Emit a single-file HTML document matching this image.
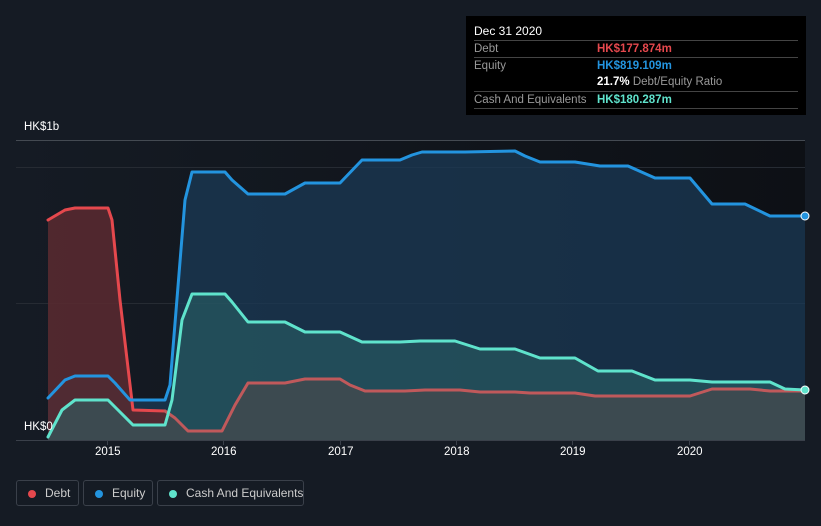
<!DOCTYPE html>
<html><head><meta charset="utf-8"><style>
body{margin:0;width:821px;height:526px;background:#151b24;font-family:"Liberation Sans",sans-serif;overflow:hidden;position:relative}
.tt{position:absolute;left:466px;top:16px;width:340px;height:99px;background:#000;color:#fff;font-size:11.5px}
.tt .h{position:absolute;left:8px;top:8px;font-size:12px}
.row{position:absolute;left:8px;width:324px;border-top:1px solid #444;height:17px;line-height:16px;white-space:nowrap}
.row .l{position:absolute;left:0;color:#999}
.row .v{position:absolute;left:123px;font-weight:bold}
.leg{position:absolute;top:480px;height:26px;border:1px solid #3a404a;border-radius:3px;color:#ccc;font-size:12px;line-height:25px;box-sizing:border-box;white-space:nowrap}
.leg i{position:absolute;left:11px;top:9px;width:8px;height:8px;border-radius:50%}
.leg span{position:absolute;left:28px}
.ax{position:absolute;color:#fff;font-size:11.5px}
</style></head><body>
<svg width="821" height="526" style="position:absolute;left:0;top:0">
<defs>
<linearGradient id="bg" x1="0" x2="1" y1="0" y2="0"><stop offset="0" stop-color="#151b24"/><stop offset="1" stop-color="#0d1015"/></linearGradient>
</defs>
<rect x="16" y="140" width="789" height="300" fill="url(#bg)"/>
<line x1="16" y1="140.5" x2="805" y2="140.5" stroke="#444a52"/>
<line x1="16" y1="167.5" x2="805" y2="167.5" stroke="#262b33"/>
<line x1="16" y1="303.5" x2="805" y2="303.5" stroke="#262b33"/>
<polygon fill="#1b3a55" fill-opacity="0.75" points="48,440 48,398 65,380 75,376 108,376 115,383 130,400 165,400 170,385 185,200 192,172 225,172 232,180 248,194 285,194 305,183 340,183 362,160 400,160 412,155 422,152 465,152 515,151 525,156 540,162 575,162 600,166 628,166 655,178 690,178 712,204 745,204 770,216 805,216 805,440"/>
<polygon fill="#5a2a30" fill-opacity="0.85" points="48,440 48,220 65,210 75,208 108,208 112,220 120,300 133,410 165,411 175,418 188,431 222,431 235,405 248,383 285,383 305,379 340,379 350,385 365,391 405,391 425,390 460,390 480,392 515,392 530,393 575,393 595,396 690,396 712,389 750,389 770,391 805,391 805,440"/>
<polygon fill="#2b6468" fill-opacity="0.55" points="48,440 48,437 62,410 75,400 108,400 120,412 133,425 165,425 172,400 182,320 192,294 225,294 232,302 248,322 285,322 305,332 340,332 362,342 400,342 420,341 455,341 480,349 515,349 540,358 575,358 598,371 632,371 655,380 690,380 712,382 770,382 785,389 805,390 805,440"/>
<g fill="none" stroke-width="3" stroke-linejoin="round" stroke-linecap="round">
<polyline stroke="#e5484d" points="48,220 65,210 75,208 108,208 112,220 120,300 133,410 165,411"/>
<polyline stroke="#c0595b" points="165,411 175,418 188,431 222,431 235,405 248,383 285,383 305,379 340,379 350,385 365,391 405,391 425,390 460,390 480,392 515,392 530,393 575,393 595,396 690,396 712,389 750,389 770,391 805,391"/>
<polyline stroke="#2394df" points="48,398 65,380 75,376 108,376 115,383 130,400 165,400 170,385 185,200 192,172 225,172 232,180 248,194 285,194 305,183 340,183 362,160 400,160 412,155 422,152 465,152 515,151 525,156 540,162 575,162 600,166 628,166 655,178 690,178 712,204 745,204 770,216 805,216"/>
<polyline stroke="#5fe3cc" points="48,437 62,410 75,400 108,400 120,412 133,425 165,425 172,400 182,320 192,294 225,294 232,302 248,322 285,322 305,332 340,332 362,342 400,342 420,341 455,341 480,349 515,349 540,358 575,358 598,371 632,371 655,380 690,380 712,382 770,382 785,389 805,390"/>
</g>
<circle cx="805" cy="216" r="4" fill="#2394df" stroke="#fff" stroke-width="1"/>
<circle cx="805" cy="390" r="4" fill="#5fe3cc" stroke="#fff" stroke-width="1"/>
<line x1="16" y1="440.5" x2="805" y2="440.5" stroke="#3a404a"/>
<g stroke="#3a404a"><line x1="107.5" y1="440" x2="107.5" y2="445"/><line x1="223.5" y1="440" x2="223.5" y2="445"/><line x1="340.5" y1="440" x2="340.5" y2="445"/><line x1="456.5" y1="440" x2="456.5" y2="445"/><line x1="572.5" y1="440" x2="572.5" y2="445"/><line x1="689.5" y1="440" x2="689.5" y2="445"/></g>
</svg>
<div class="ax" style="left:24px;top:121px">HK$1b</div>
<div class="ax" style="left:24px;top:421px">HK$0</div>
<div class="ax" style="left:95px;top:446px">2015</div>
<div class="ax" style="left:211px;top:446px">2016</div>
<div class="ax" style="left:328px;top:446px">2017</div>
<div class="ax" style="left:444px;top:446px">2018</div>
<div class="ax" style="left:560px;top:446px">2019</div>
<div class="ax" style="left:677px;top:446px">2020</div>
<div class="tt">
<div class="h">Dec 31 2020</div>
<div class="row" style="top:24px"><span class="l">Debt</span><span class="v" style="color:#e5484d">HK$177.874m</span></div>
<div class="row" style="top:41px"><span class="l">Equity</span><span class="v" style="color:#2394df">HK$819.109m</span></div>
<div class="row" style="top:58px;border-top:none"><span class="v" style="color:#fff">21.7% <span style="color:#999;font-weight:normal">Debt/Equity Ratio</span></span></div>
<div class="row" style="top:75px"><span class="l">Cash And Equivalents</span><span class="v" style="color:#5fe3cc">HK$180.287m</span></div>
<div class="row" style="top:92px;height:0"></div>
</div>
<div class="leg" style="left:16px;width:63px"><i style="background:#e5484d"></i><span>Debt</span></div>
<div class="leg" style="left:83px;width:70px"><i style="background:#2394df"></i><span>Equity</span></div>
<div class="leg" style="left:157px;width:147px"><i style="background:#5fe3cc"></i><span>Cash And Equivalents</span></div>
</body></html>
